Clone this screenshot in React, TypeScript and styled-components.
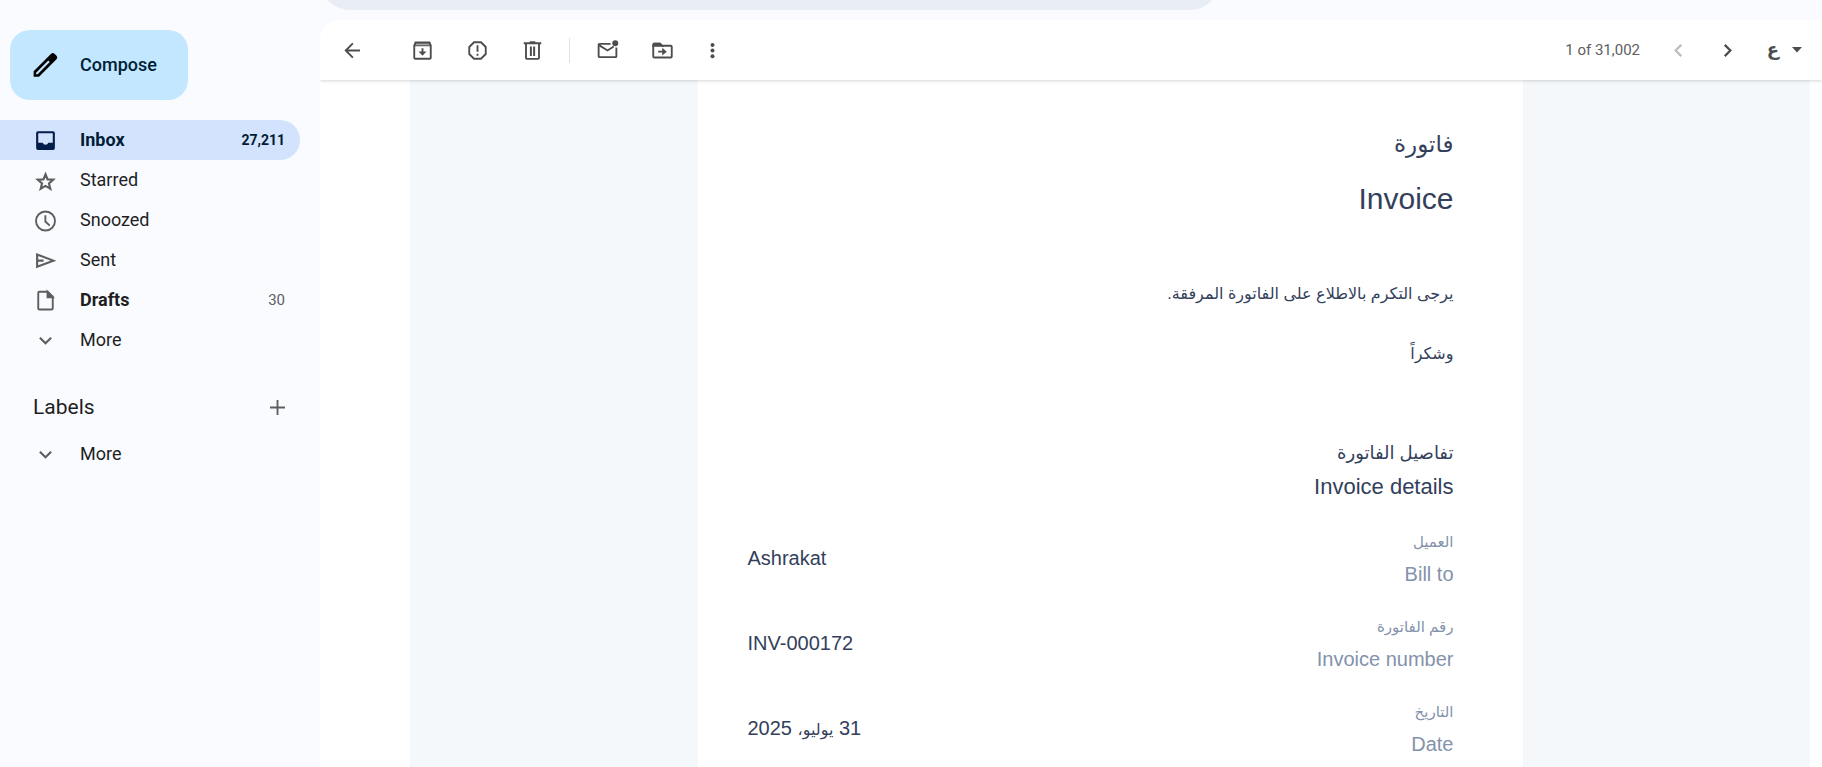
import React from "react";
import styled, { createGlobalStyle } from "styled-components";

const GlobalStyle = createGlobalStyle`
  *, *::before, *::after { box-sizing: border-box; }
  html, body, #root { height: 100%; }
  body {
    margin: 0;
    overflow: hidden;
    background: #f9fbff;
    color: #1f1f1f;
    font-family: Roboto, "Noto Sans", sans-serif;
  }
  button { border: 0; background: none; padding: 0; font: inherit; color: inherit; cursor: pointer; }
`;

const Shell = styled.div`
  display: grid;
  grid-template-columns: 320px minmax(0, 1fr);
  height: 100%;
`;

const Sidebar = styled.aside`
  padding-top: 30px;
`;

const ComposeButton = styled.button`
  display: flex;
  align-items: center;
  gap: 20px;
  width: 178px;
  height: 70px;
  margin: 0 0 20px 10px;
  padding-left: 20px;
  border-radius: 20px;
  background: #c2e7ff;
  color: #001d35;
  font-size: 18px;
  font-weight: 500;
  text-align: left;
  svg { width: 30px; height: 30px; color: #000; }
`;

const NavLink = styled.a<{ $active?: boolean; $bold?: boolean }>`
  display: flex;
  align-items: center;
  gap: 22px;
  height: 40px;
  margin-right: 20px;
  padding: 0 15px 0 33px;
  border-radius: 0 20px 20px 0;
  background: ${(p) => (p.$active ? "#d3e3fd" : "transparent")};
  color: ${(p) => (p.$active ? "#001d35" : "#1f1f1f")};
  font-size: 18px;
  font-weight: ${(p) => (p.$active || p.$bold ? 700 : 400)};
  text-decoration: none;
  svg { width: 25px; height: 25px; color: ${(p) => (p.$active ? "#041e49" : "#5e5e5e")}; }
`;

const NavLabel = styled.span`
  flex: 1;
  padding-bottom: 2px;
`;

const Count = styled.span<{ $active?: boolean }>`
  color: ${(p) => (p.$active ? "#001d35" : "#5e5e5e")};
  font-size: ${(p) => (p.$active ? 14 : 15)}px;
  font-weight: ${(p) => (p.$active ? 700 : 400)};
`;

const LabelsHeader = styled.div`
  display: flex;
  align-items: center;
  justify-content: space-between;
  height: 54px;
  margin: 20px 20px 0 0;
  padding: 0 10px 0 33px;
  svg { display: block; width: 25px; height: 25px; color: #5e5e5e; }
`;

const LabelsTitle = styled.h2`
  margin: 0;
  font-size: 21px;
  font-weight: 400;
`;

const Content = styled.div`
  display: flex;
  flex-direction: column;
  min-width: 0;
  min-height: 0;
`;

const TopBar = styled.header`
  display: flex;
  align-items: flex-end;
  flex: none;
  height: 20px;
  padding-bottom: 10px;
  overflow: hidden;
`;

const SearchPill = styled.div`
  flex: none;
  width: 60%;
  max-width: 900px;
  height: 60px;
  border-radius: 30px;
  background: #e9eef6;
`;

const Panel = styled.main`
  flex: 1;
  display: flex;
  flex-direction: column;
  min-height: 0;
  border-radius: 20px 0 0 0;
  background: #fff;
  overflow: hidden;
`;

const Toolbar = styled.div`
  display: flex;
  align-items: center;
  gap: 5px;
  height: 60px;
  flex: none;
  padding: 0 20px 0 7px;
  box-shadow: 0 1px 3px rgba(0, 0, 0, 0.16);
  z-index: 1;
`;

const IconButton = styled.button<{ $size?: number; $spaced?: boolean; $dim?: boolean }>`
  display: grid;
  place-items: center;
  width: ${(p) => p.$size ?? 50}px;
  height: 50px;
  margin-right: ${(p) => (p.$spaced ? 15 : 0)}px;
  color: ${(p) => (p.$dim ? "#bdbdbd" : "#4c4e4d")};
  svg { width: 25px; height: 25px; }
`;

const Divider = styled.span`
  width: 1px;
  height: 25px;
  margin: 0 7px;
  background: #e0e3e6;
`;

const Position = styled.span`
  margin-left: auto;
  margin-right: 11px;
  color: #5e5e5e;
  font-size: 15px;
`;

const LanguageButton = styled.button`
  display: flex;
  align-items: center;
  gap: 10px;
  height: 50px;
  padding-left: 10px;
  color: #4c4e4d;
  svg { width: 10px; height: 6px; }
`;

const Letter = styled.span`
  width: 18px;
  font-family: "DejaVu Sans", sans-serif;
  font-size: 18px;
  font-weight: 700;
  line-height: 20px;
  text-align: center;
`;

const Message = styled.div`
  flex: 1;
  display: flex;
  justify-content: center;
  min-height: 0;
  margin: 0 12px 0 90px;
  background: #f4f8fb;
  overflow: hidden;
`;

const Card = styled.article`
  width: 825px;
  padding: 44px 69px 0 50px;
  background: #fff;
  color: #333f5b;
  font-family: "Liberation Sans", "DejaVu Sans", sans-serif;
  text-align: right;
`;

const TitleAr = styled.h1`
  margin: 0;
  font-size: 23px;
  line-height: 40px;
  font-weight: 400;
`;

const Title = styled.h1`
  margin: 0 0 30px;
  font-size: 30px;
  line-height: 70px;
  font-weight: 400;
`;

const Note = styled.p`
  margin: 0;
  font-size: 16px;
  line-height: 60px;
`;

const SectionAr = styled.h2`
  margin: 52px 0 0;
  font-size: 18px;
  line-height: 34px;
  font-weight: 400;
`;

const Section = styled.h2`
  margin: 0 0 22px;
  font-size: 22px;
  line-height: 34px;
  font-weight: 400;
`;

const Details = styled.dl`
  margin: 0;
`;

const Row = styled.div`
  display: flex;
  flex-direction: row-reverse;
  align-items: center;
  justify-content: space-between;
  height: 64px;
  margin-bottom: 21px;
`;

const Term = styled.dt`
  color: #8492ab;
  font-size: 20px;
  line-height: 32px;
`;

const TermAr = styled.span`
  display: block;
  font-size: 15px;
`;

const Value = styled.dd`
  margin: 0;
  font-size: 20px;
`;

const Month = styled.span`
  font-size: 16px;
`;

const Svg = ({ children, box = "0 0 20 20" }: { children: React.ReactNode; box?: string }) => (
  <svg viewBox={box} fill="none" stroke="currentColor" strokeWidth="1.5" aria-hidden="true">
    {children}
  </svg>
);

const chevronDown = <path d="M5.500 7.800l4.500 4.400 4.500-4.400" strokeWidth="1.700" />;

const items = [
  {
    label: "Inbox",
    count: "27,211",
    active: true,
    icon: (
      <path
        d="M4 2.500h12A1.500 1.500 0 0 1 17.500 4v12a1.500 1.500 0 0 1-1.500 1.500H4A1.500 1.500 0 0 1 2.500 16V4A1.500 1.500 0 0 1 4 2.500zM4.200 4.200v7.600h3.600a2.300 2.300 0 0 0 4.400 0h3.600V4.200z"
        fill="currentColor"
        fillRule="evenodd"
        stroke="none"
      />
    ),
  },
  {
    label: "Starred",
    icon: <path d="M10 5l1.650 4.100 4.500.300-3.400 2.900 1.100 4.300L10 14.300l-3.850 2.300 1.100-4.300-3.400-2.900 4.500-.300z" strokeWidth="1.700" />,
  },
  {
    label: "Snoozed",
    icon: (
      <>
        <circle cx="10" cy="10.400" r="7.600" />
        <path d="M9.900 5.800v5l3.500 3.300" />
      </>
    ),
  },
  { label: "Sent", icon: <path d="M3.300 5.200v9.800l13-4.900zM3.500 10.100h5" strokeWidth="1.700" /> },
  {
    label: "Drafts",
    count: "30",
    bold: true,
    icon: (
      <>
        <path d="M5 3h6.800l4 4v9.400a.8.8 0 0 1-.8.8H5a.8.8 0 0 1-.8-.8V3.800A.8.8 0 0 1 5 3z" />
        <path d="M11.600 3v4.400h4.200z" fill="currentColor" />
      </>
    ),
  },
  { label: "More", icon: chevronDown },
];

const details = [
  { ar: "العميل", en: "Bill to", value: "Ashrakat" },
  { ar: "رقم الفاتورة", en: "Invoice number", value: "INV-000172" },
  { ar: "التاريخ", en: "Date", rtl: true, value: <>31 <Month>يوليو،</Month> 2025</> },
];

export default function App() {
  return (
    <>
      <GlobalStyle />
      <Shell>
        <Sidebar>
          <ComposeButton type="button">
            <Svg box="0 0 24 24">
              <path
                d="M2.900 21.300v-4.300L16.700 3.200a2.200 2.200 0 0 1 3.100 0l1.200 1.200a2.200 2.200 0 0 1 0 3.100L7.200 21.300zM4.900 19.300h1.200L15.800 9.600l-1.200-1.200L4.900 18.100z"
                fill="currentColor"
                fillRule="evenodd"
                stroke="none"
              />
            </Svg>
            <NavLabel>Compose</NavLabel>
          </ComposeButton>
          <nav>
            {items.map((item) => (
              <NavLink key={item.label} href="#" $active={item.active} $bold={item.bold}>
                <Svg>{item.icon}</Svg>
                <NavLabel>{item.label}</NavLabel>
                {item.count && <Count $active={item.active}>{item.count}</Count>}
              </NavLink>
            ))}
          </nav>
          <LabelsHeader>
            <LabelsTitle>Labels</LabelsTitle>
            <button type="button" aria-label="Create new label">
              <Svg><path d="M10 4v12M4 10h12" /></Svg>
            </button>
          </LabelsHeader>
          <NavLink href="#">
            <Svg>{chevronDown}</Svg>
            <NavLabel>More</NavLabel>
          </NavLink>
        </Sidebar>
        <Content>
          <TopBar><SearchPill /></TopBar>
          <Panel>
            <Toolbar>
              <IconButton type="button" aria-label="Back" $spaced>
                <Svg><path d="M16 10H5M10.300 4.300L4.600 10l5.700 5.700" /></Svg>
              </IconButton>
              <IconButton type="button" aria-label="Archive">
                <Svg>
                  <path d="M3.400 6l1-2.400h11.200l1 2.400v9.800a.8.8 0 0 1-.8.8H4.200a.8.8 0 0 1-.8-.8z" />
                  <path d="M3.600 6.200h12.800l-.8-2.400H4.400z" fill="currentColor" fillOpacity="0.5" strokeWidth="0.800" />
                  <path d="M10 8.200v3.500" />
                  <path d="M6.800 10.800h6.400L10 14.100z" fill="currentColor" stroke="none" />
                </Svg>
              </IconButton>
              <IconButton type="button" aria-label="Report spam">
                <Svg>
                  <path d="M7.200 3.400h5.600l3.800 3.800v5.600l-3.800 3.800H7.200l-3.800-3.800V7.200z" />
                  <path d="M10 5.800v5.200M10 12.500v1.600" />
                </Svg>
              </IconButton>
              <IconButton type="button" aria-label="Delete">
                <Svg>
                  <path d="M4.800 4.800v11a.9.9 0 0 0 .9.900h8.600a.9.900 0 0 0 .9-.900v-11M3 4.200h14M7.800 3.300h4.400" />
                  <path d="M8.700 6.700v7.600M11.300 6.700v7.600" strokeWidth="1.600" />
                </Svg>
              </IconButton>
              <Divider />
              <IconButton type="button" aria-label="Mark as unread">
                <Svg>
                  <path d="M12.400 4.700H3.600a.7.7 0 0 0-.7.700v9.200a.7.700 0 0 0 .7.700h12.800a.7.700 0 0 0 .7-.700V7.600" />
                  <path d="M3.200 5.700L10 10l5-3.200" />
                  <circle cx="16.200" cy="4.200" r="2.400" fill="currentColor" stroke="none" />
                </Svg>
              </IconButton>
              <IconButton type="button" aria-label="Move to">
                <Svg>
                  <path d="M3.300 4.500h4.600l1.600 1.700h7.100a.8.8 0 0 1 .8.800v7.800a.8.8 0 0 1-.8.800H3.400a.8.8 0 0 1-.8-.8V5.200a.7.700 0 0 1 .7-.700z" />
                  <path d="M2.600 6.200h7L8 4.500H3.200z" fill="currentColor" />
                  <path d="M6.500 10.900h4" />
                  <path d="M9.800 7.800v6.200l3.600-3.100z" fill="currentColor" stroke="none" />
                </Svg>
              </IconButton>
              <IconButton type="button" aria-label="More options" $size={40}>
                <Svg>
                  <g fill="currentColor" stroke="none">
                    <circle cx="10" cy="5.500" r="1.600" />
                    <circle cx="10" cy="10" r="1.600" />
                    <circle cx="10" cy="14.500" r="1.600" />
                  </g>
                </Svg>
              </IconButton>
              <Position>1 of 31,002</Position>
              <IconButton type="button" aria-label="Newer" $size={44} $dim>
                <Svg><path d="M12.200 5.500L7.700 10l4.500 4.500" strokeWidth="1.800" /></Svg>
              </IconButton>
              <IconButton type="button" aria-label="Older" $size={44}>
                <Svg><path d="M7.800 5.500l4.500 4.500-4.500 4.500" strokeWidth="1.800" /></Svg>
              </IconButton>
              <LanguageButton type="button" aria-label="Input tools">
                <Letter lang="ar">ع</Letter>
                <Svg box="0 0 10 6"><path d="M0 0h10L5 5.500z" fill="currentColor" stroke="none" /></Svg>
              </LanguageButton>
            </Toolbar>
            <Message>
              <Card>
                <TitleAr dir="rtl" lang="ar">فاتورة</TitleAr>
                <Title>Invoice</Title>
                <Note dir="rtl" lang="ar">يرجى التكرم بالاطلاع على الفاتورة المرفقة.</Note>
                <Note dir="rtl" lang="ar">وشكراً</Note>
                <SectionAr dir="rtl" lang="ar">تفاصيل الفاتورة</SectionAr>
                <Section>Invoice details</Section>
                <Details>
                  {details.map((row) => (
                    <Row key={row.en}>
                      <Term>
                        <TermAr dir="rtl" lang="ar">{row.ar}</TermAr>
                        {row.en}
                      </Term>
                      <Value dir={row.rtl ? "rtl" : "ltr"}>{row.value}</Value>
                    </Row>
                  ))}
                </Details>
              </Card>
            </Message>
          </Panel>
        </Content>
      </Shell>
    </>
  );
}
